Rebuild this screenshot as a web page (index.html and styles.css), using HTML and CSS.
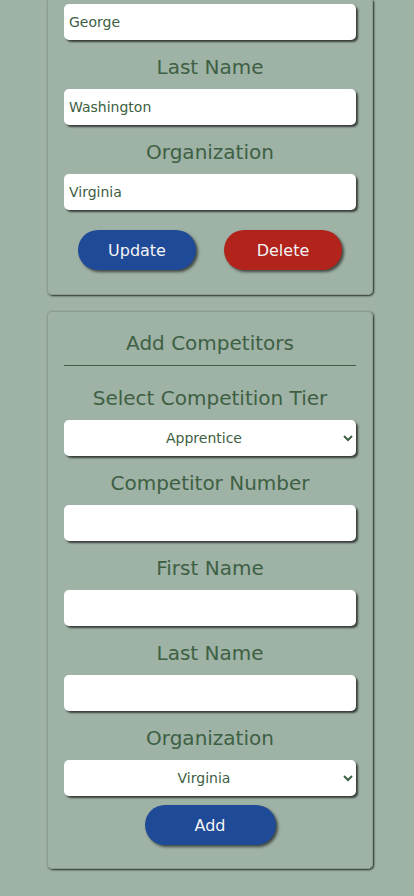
FILE: index.html
```html
<!DOCTYPE html>
<html lang="en">
<head>
<meta charset="utf-8">
<meta name="viewport" content="width=device-width, initial-scale=1">
<title>Competitors</title>
<link rel="stylesheet" href="styles.css">
</head>
<body>
<main class="page">
  <section class="card card--continued">
    <input class="field" type="text" value="George">
    <label class="label">Last Name</label>
    <input class="field" type="text" value="Washington">
    <label class="label">Organization</label>
    <input class="field" type="text" value="Virginia">
    <div class="actions">
      <button class="btn btn--blue" type="button">Update</button>
      <button class="btn btn--red" type="button">Delete</button>
    </div>
  </section>

  <section class="card">
    <h2 class="card-title">Add Competitors</h2>
    <label class="label">Select Competition Tier</label>
    <select class="field field--select">
      <option>Apprentice</option>
      <option>Journeyman</option>
      <option>Master</option>
    </select>
    <label class="label">Competitor Number</label>
    <input class="field" type="text">
    <label class="label">First Name</label>
    <input class="field" type="text">
    <label class="label">Last Name</label>
    <input class="field" type="text">
    <label class="label">Organization</label>
    <select class="field field--select">
      <option>Virginia</option>
      <option>Maryland</option>
    </select>
    <div class="actions actions--single">
      <button class="btn btn--blue btn--wide" type="button">Add</button>
    </div>
  </section>
</main>
</body>
</html>
```

FILE: styles.css
```css
* { box-sizing: border-box; }

html, body {
  margin: 0;
  padding: 0;
  background: #9fb2a6;
}

body {
  font-family: "DejaVu Sans", "Open Sans", sans-serif;
  color: #3d6043;
}

.page {
  display: flex;
  flex-direction: column;
  gap: 16px;
  padding: 0 0 26px 47px;
}

.card {
  width: 326px;
  display: flex;
  flex-direction: column;
  padding: 19px 16px 23px;
  border: 1px solid #8c9c92;
  border-radius: 5px;
  box-shadow: 1px 1px 2px rgba(20, 30, 22, 0.9);
}

.card--continued {
  border-top: 0;
  border-radius: 0 0 5px 5px;
  padding-top: 4px;
  padding-bottom: 24px;
}

.card-title {
  margin: 0 0 5px;
  font-size: 20px;
  font-weight: normal;
  line-height: 24px;
  text-align: center;
  padding-bottom: 10px;
  border-bottom: 1px solid #3d6043;
}

.label {
  display: block;
  margin: 15px 0 10px;
  font-size: 20px;
  line-height: 24px;
  text-align: center;
}

.field {
  width: 100%;
  height: 36px;
  border: 0;
  border-radius: 5px;
  background: #fff;
  padding: 0 5px;
  font-family: inherit;
  font-size: 14px;
  color: #3d6043;
  box-shadow: 2px 2px 2px rgba(0, 0, 0, 0.65);
}

.field--select {
  text-align: center;
  text-align-last: center;
}

.actions {
  display: flex;
  justify-content: space-around;
  margin-top: 20px;
}

.actions--single {
  justify-content: center;
  margin-top: 9px;
}

.btn {
  width: 118px;
  height: 40px;
  border: 0;
  border-radius: 20px;
  font-family: inherit;
  font-size: 16px;
  color: #f3f3f3;
  box-shadow: 2px 2px 3px rgba(0, 0, 0, 0.6);
}

.btn--wide { width: 131px; }
.btn--blue { background: #1e4a97; }
.btn--red { background: #b1231b; }
```
